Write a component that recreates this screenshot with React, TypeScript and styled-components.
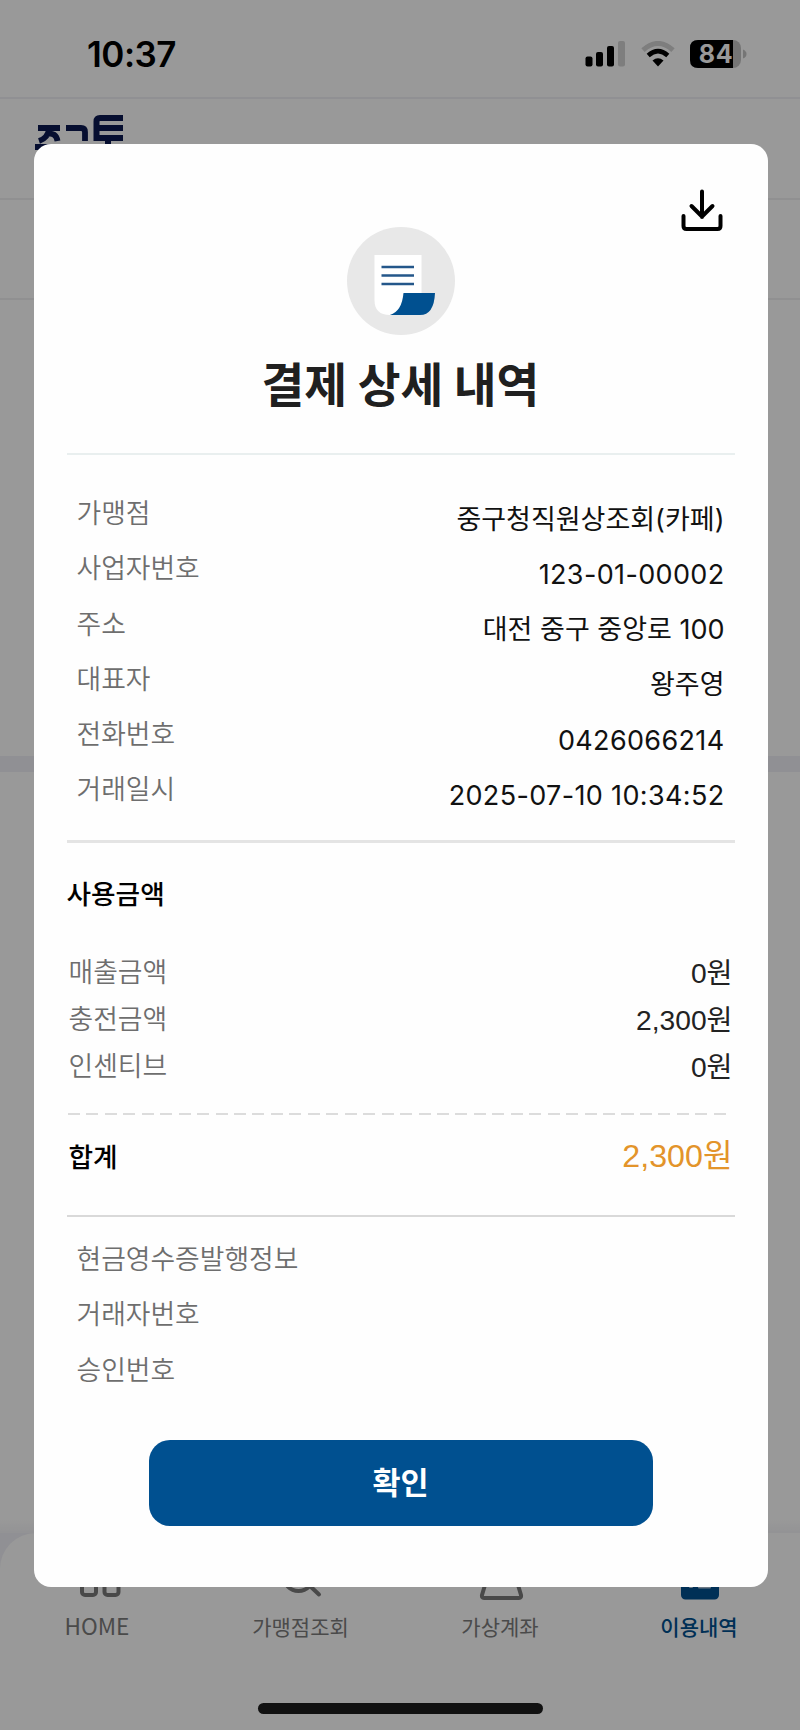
import React from "react";
import styled, { createGlobalStyle } from "styled-components";

const BLUE = "#005090";
const LATIN = `Inter, "Noto Sans CJK KR", sans-serif`;
const KOREAN = `"Noto Sans CJK KR", sans-serif`;
const HELV = `"Liberation Sans", "Noto Sans CJK KR", sans-serif`;

const GlobalStyle = createGlobalStyle`
  * { box-sizing: border-box; }
  body { margin: 0; background: #fff; font-family: ${KOREAN}; }
`;

const Screen = styled.div`
  position: relative;
  width: 800px;
  height: 1730px;
  overflow: hidden;
  display: flex;
  flex-direction: column;
  background: #fff;
`;

const StatusBar = styled.header`
  height: 99px;
  flex: none;
  display: flex;
  justify-content: space-between;
  align-items: flex-start;
  padding: 33px 53px 0 87px;
  border-bottom: 2px solid #f0f0f5;
`;

const Clock = styled.div`
  font: 570 35px/42px ${LATIN};
  letter-spacing: -0.5px;
  color: #000;
`;

const StatusIcons = styled.div`
  display: flex;
  align-items: center;
  gap: 15px;
  padding-top: 6.5px;
`;

const Brand = styled.div`
  height: 101px;
  flex: none;
  padding: 16px 34.5px;
  border-bottom: 2px solid #f0f0f2;
`;

const Tabs = styled.div`
  height: 100px;
  flex: none;
  border-bottom: 2px solid #f0f0f2;
`;

const Summary = styled.div`
  height: 456px;
  flex: none;
`;

const Separator = styled.div`
  height: 16px;
  flex: none;
  background: #f0f0f7;
`;

const History = styled.div`
  flex: 1;
  background: linear-gradient(#fff 0, #fff 748px, #f5f5f8 761px);
`;

const NavBackdrop = styled.div`
  flex: none;
  background: #f1f1f7;
`;

const BottomNav = styled.nav`
  height: 197px;
  display: grid;
  grid-template-columns: 194px 213px 186px 212px;
  justify-content: start;
  padding-top: 26px;
  border-radius: 36px 0 0 0;
  background: #fff;
`;

const NavItem = styled.div<{ $active?: boolean; $size?: number }>`
  display: flex;
  flex-direction: column;
  align-items: center;
  gap: 7px;
  font: ${(p) => (p.$active ? 500 : 400)} ${(p) => p.$size ?? 21}px/32px ${KOREAN};
  color: ${(p) => (p.$active ? BLUE : "#7c7c7c")};
`;

const Overlay = styled.div`
  position: absolute;
  inset: 0;
  background: rgba(0, 0, 0, 0.4);
  display: flex;
  justify-content: center;
  align-items: flex-start;
  padding: 144px 0 0 1px;
`;

const Modal = styled.section`
  width: 734px;
  height: 1443px;
  border-radius: 17px;
  background: #fefefe;
  padding: 0 33px;
  display: flex;
  flex-direction: column;
`;

const Toolbar = styled.div`
  height: 83px;
  flex: none;
  display: flex;
  justify-content: flex-end;
  padding: 44px 11.5px 0 0;
`;

const Hero = styled.div`
  height: 228px;
  flex: none;
  display: flex;
  flex-direction: column;
  align-items: center;
  border-bottom: 2px solid #e9efef;
`;

const Title = styled.h1`
  margin: 13px 0 0;
  font: 700 46.5px/68px ${KOREAN};
  color: #202020;
  white-space: nowrap;
`;

const InfoList = styled.dl<{ $top: number; $height: number; $line?: boolean }>`
  margin: 0;
  height: ${(p) => p.$height}px;
  flex: none;
  padding: ${(p) => p.$top}px 10px 0;
  border-bottom: ${(p) => (p.$line ? "3px solid #e4e4e4" : "0")};
`;

const InfoRow = styled.div`
  height: 55.3px;
  display: flex;
  justify-content: space-between;
`;

const Label = styled.dt`
  font: 350 26.8px/40px ${KOREAN};
  color: #6e6e6e;
  white-space: nowrap;
`;

const InfoValue = styled.dd<{ $numeric?: boolean }>`
  margin: 0;
  padding-top: 7.5px;
  font: 400 27px/40px ${LATIN};
  letter-spacing: ${(p) => (p.$numeric ? 0.35 : 0)}px;
  color: #111;
  white-space: nowrap;
`;

const SectionTitle = styled.h2`
  margin: 0;
  height: 108px;
  flex: none;
  padding-top: 30px;
  font: 500 26.7px/40px ${KOREAN};
  color: #000;
`;

const AmountRow = styled.div`
  height: 47.2px;
  flex: none;
  display: flex;
  justify-content: space-between;
  padding: 0 2px 0 2px;
`;

const AmountValue = styled.span`
  padding-top: 2px;
  font: 400 28.2px/40px ${HELV};
  color: #222;
`;

const Dashes = styled.div`
  height: 2px;
  flex: none;
  margin: 20.4px 7px 0 1px;
  background: repeating-linear-gradient(90deg, #dcdcdc 0 12px, transparent 12px 18.45px);
`;

const TotalRow = styled.div`
  height: 102px;
  flex: none;
  display: flex;
  justify-content: space-between;
  padding: 21px 2px 0 2px;
  border-bottom: 2px solid #d9d9d9;
`;

const TotalLabel = styled.span`
  font: 500 26.7px/40px ${KOREAN};
  color: #000;
`;

const TotalValue = styled.span`
  font: 400 32.2px/40px ${HELV};
  color: #e3942a;
`;

const Confirm = styled.button`
  width: 504px;
  height: 86px;
  flex: none;
  align-self: center;
  border: 0;
  border-radius: 21px;
  background: ${BLUE};
  color: #fff;
  font: 700 30.5px/44px ${KOREAN};
  padding: 0 0 3px;
`;

const HomeIndicator = styled.div`
  position: absolute;
  left: 258px;
  top: 1703px;
  width: 285px;
  height: 11px;
  border-radius: 6px;
  background: #111;
`;

const info = [
  ["가맹점", "중구청직원상조회(카페)"],
  ["사업자번호", "123-01-00002"],
  ["주소", "대전 중구 중앙로 100"],
  ["대표자", "왕주영"],
  ["전화번호", "0426066214"],
  ["거래일시", "2025-07-10 10:34:52"],
];

const amounts = [
  ["매출금액", "0원"],
  ["충전금액", "2,300원"],
  ["인센티브", "0원"],
];

const Signal = () => (
  <svg width="41" height="26" viewBox="0 0 41 26">
    <rect x="0.5" y="15.5" width="7" height="10" rx="2" />
    <rect x="11" y="11" width="7" height="14.5" rx="2" />
    <rect x="22" y="5" width="7" height="20.5" rx="2" />
    <rect x="33" y="0" width="7" height="25.5" rx="2" fill="#d2d2d2" />
  </svg>
);

const Wifi = () => (
  <svg width="34" height="26" viewBox="0 0 34 26" fill="none">
    <path d="M2 9.2Q17 -4.200 32 9.2" stroke="#d2d2d2" strokeWidth="5" />
    <path d="M7.200 14.400Q17 5.800 26.800 14.400" stroke="#000" strokeWidth="4.600" />
    <path d="M11.500 19.500Q17 15 22.500 19.500L17 25.500Z" fill="#000" />
  </svg>
);

const Battery = () => (
  <svg width="57" height="28" viewBox="0 0 57 28">
    <rect x="0" y="0" width="51" height="28" rx="8" fill="#c4c4c4" />
    <path d="M8 0H43V28H8Q0 28 0 20V8Q0 0 8 0Z" fill="#000" />
    <path d="M53 9.500Q56.500 11 56.500 14T53 18.500Z" fill="#c4c4c4" />
    <text x="26" y="23" textAnchor="middle" fontFamily="Inter, sans-serif" fontWeight="650" fontSize="25" letterSpacing="0.6" fill="#fff">84</text>
  </svg>
);

const Logo = () => (
  <svg width="90" height="48" viewBox="0 0 90 48" fill="none" stroke="#0a1850" strokeWidth="5.800">
    <path d="M3 13H25M14 14Q13 23 4 26M12 19Q21 17 22.500 26M0 32H28" />
    <path d="M31 13H46Q50 13 50 17V26" />
    <path d="M88 3H65Q61.500 3 61.500 6.500V23H88M61.500 13H88M73 23V34" strokeWidth="6" />
  </svg>
);

const Download = () => (
  <svg width="42" height="44" viewBox="0 0 42 44" fill="none" stroke="#000" strokeWidth="4" strokeLinecap="round" strokeLinejoin="round">
    <path d="M21 3.500V29M10.500 18L21 28.500L31.500 18M2.500 28V38Q2.500 41 5.500 41H36.500Q39.500 41 39.500 38V28" />
  </svg>
);

const Receipt = () => (
  <svg width="108" height="108" viewBox="0 0 108 108">
    <circle cx="54" cy="54" r="54" fill="#e8e8e8" />
    <path d="M27.500 28H74.500V67H56Q55 88 43 88Q27.500 88 27.500 73Z" fill="#fff" />
    <path d="M56.500 66H88Q87 88 73 88H43Q55 84 56.500 66Z" fill={BLUE} />
    <path d="M34.500 40H67M34.500 48.500H67M34.500 57H67" stroke="#24578a" strokeWidth="2.500" />
  </svg>
);

const NavIcon = styled.svg.attrs({ width: 44, height: 44, viewBox: "0 0 44 44" })`
  overflow: visible;
  fill: none;
  stroke: #7a7a7a;
  stroke-width: 4;
  stroke-linecap: round;
  stroke-linejoin: round;
`;

const HomeIcon = () => (
  <NavIcon>
    <rect x="7" y="0" width="14" height="14" rx="3" />
    <rect x="29.500" y="0" width="14" height="14" rx="3" />
    <rect x="7" y="22" width="14" height="14" rx="3" />
    <rect x="29.500" y="22" width="14" height="14" rx="3" />
  </NavIcon>
);

const SearchIcon = () => (
  <NavIcon>
    <circle cx="19.500" cy="17" r="15" />
    <path d="M31 27L40 35.500" />
  </NavIcon>
);

const AccountIcon = () => (
  <NavIcon>
    <path d="M10 16H37L43 36Q43.500 39 41 39H6Q3.500 39 4 36Z" />
  </NavIcon>
);

const HistoryIcon = () => (
  <NavIcon>
    <rect x="6" y="4" width="34" height="34.500" rx="2.500" fill={BLUE} stroke={BLUE} />
    <path d="M13 28H15M22 28.500H33" stroke="#b8cce0" strokeWidth="2" />
  </NavIcon>
);

export default function App() {
  return (
    <>
      <GlobalStyle />
      <Screen>
        <StatusBar>
          <Clock>10:37</Clock>
          <StatusIcons><Signal /><Wifi /><Battery /></StatusIcons>
        </StatusBar>
        <Brand><Logo /></Brand>
        <Tabs />
        <Summary />
        <Separator />
        <History />
        <NavBackdrop>
          <BottomNav>
            <NavItem $size={22.6}><HomeIcon />HOME</NavItem>
            <NavItem><SearchIcon />가맹점조회</NavItem>
            <NavItem><AccountIcon />가상계좌</NavItem>
            <NavItem $active><HistoryIcon />이용내역</NavItem>
          </BottomNav>
        </NavBackdrop>
        <Overlay>
          <Modal>
            <Toolbar><Download /></Toolbar>
            <Hero>
              <Receipt />
              <Title>결제 상세 내역</Title>
            </Hero>
            <InfoList $top={37} $height={388} $line>
              {info.map(([k, v]) => (
                <InfoRow key={k}>
                  <Label>{k}</Label>
                  <InfoValue $numeric={/^[\d\-: ]+$/.test(v)}>{v}</InfoValue>
                </InfoRow>
              ))}
            </InfoList>
            <SectionTitle>사용금액</SectionTitle>
            {amounts.map(([k, v]) => (
              <AmountRow key={k}><Label as="span">{k}</Label><AmountValue>{v}</AmountValue></AmountRow>
            ))}
            <Dashes />
            <TotalRow><TotalLabel>합계</TotalLabel><TotalValue>2,300원</TotalValue></TotalRow>
            <InfoList $top={21} $height={223}>
              {["현금영수증발행정보", "거래자번호", "승인번호"].map((k) => (
                <InfoRow key={k}><Label>{k}</Label></InfoRow>
              ))}
            </InfoList>
            <Confirm>확인</Confirm>
          </Modal>
        </Overlay>
        <HomeIndicator />
      </Screen>
    </>
  );
}
